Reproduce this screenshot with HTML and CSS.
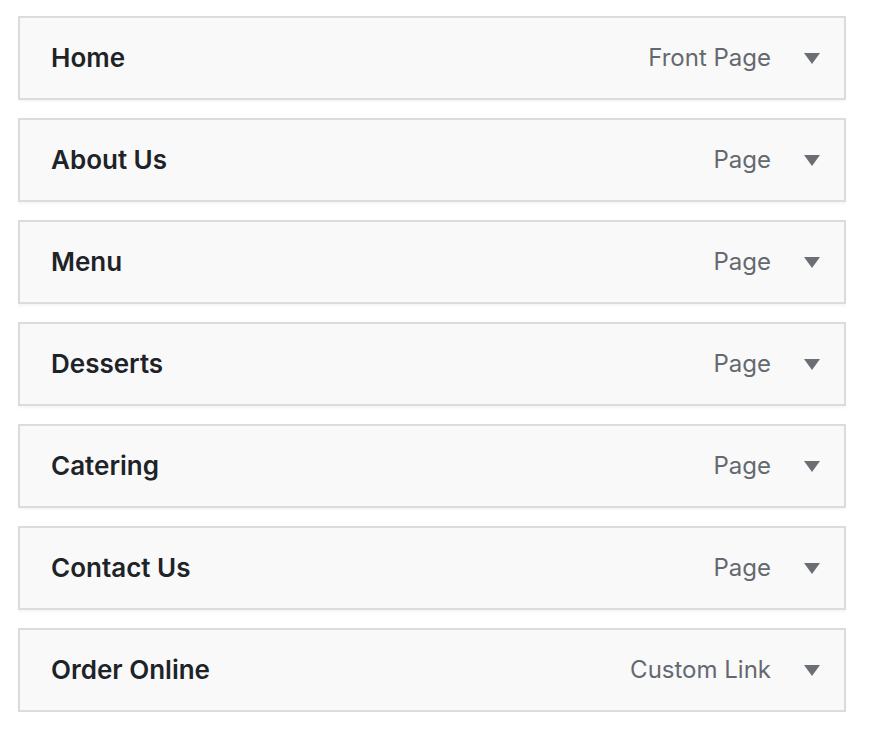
FILE: index.html
```html
<!DOCTYPE html>
<html lang="en">
<head>
<meta charset="utf-8">
<title>Menu structure</title>
<link rel="stylesheet" href="styles.css">
</head>
<body>
<ul class="menu">
  <li class="item"><span class="title">Home</span><span class="type">Front Page</span><span class="arrow"></span></li>
  <li class="item"><span class="title">About Us</span><span class="type">Page</span><span class="arrow"></span></li>
  <li class="item"><span class="title">Menu</span><span class="type">Page</span><span class="arrow"></span></li>
  <li class="item"><span class="title">Desserts</span><span class="type">Page</span><span class="arrow"></span></li>
  <li class="item"><span class="title">Catering</span><span class="type">Page</span><span class="arrow"></span></li>
  <li class="item"><span class="title">Contact Us</span><span class="type">Page</span><span class="arrow"></span></li>
  <li class="item"><span class="title">Order Online</span><span class="type">Custom Link</span><span class="arrow"></span></li>
</ul>
</body>
</html>
```
FILE: styles.css
```css
html, body {
  margin: 0;
  padding: 0;
  background: #ffffff;
}
body {
  font-family: Inter, "Noto Sans", "Liberation Sans", sans-serif;
}
.menu {
  list-style: none;
  margin: 0;
  padding: 16px 0 0 18px;
  width: 828px;
  display: flex;
  flex-direction: column;
  gap: 18px;
}
.item {
  box-sizing: border-box;
  height: 84px;
  display: flex;
  align-items: center;
  border: 2px solid #dcdcde;
  background: #f9f9f9;
  box-shadow: 0 2px 2px rgba(0,0,0,0.04);
  padding: 0 24px 2px 31px;
}
.title {
  flex: 1;
  font-size: 26px;
  font-weight: 600;
  color: #1d2327;
}
.type {
  font-size: 24px;
  font-weight: 400;
  color: #646970;
  margin-right: 33px;
}
.arrow {
  width: 0;
  height: 0;
  border-left: 8px solid transparent;
  border-right: 8px solid transparent;
  border-top: 11px solid #6b6f74;
  margin-top: 2px;
}
```
